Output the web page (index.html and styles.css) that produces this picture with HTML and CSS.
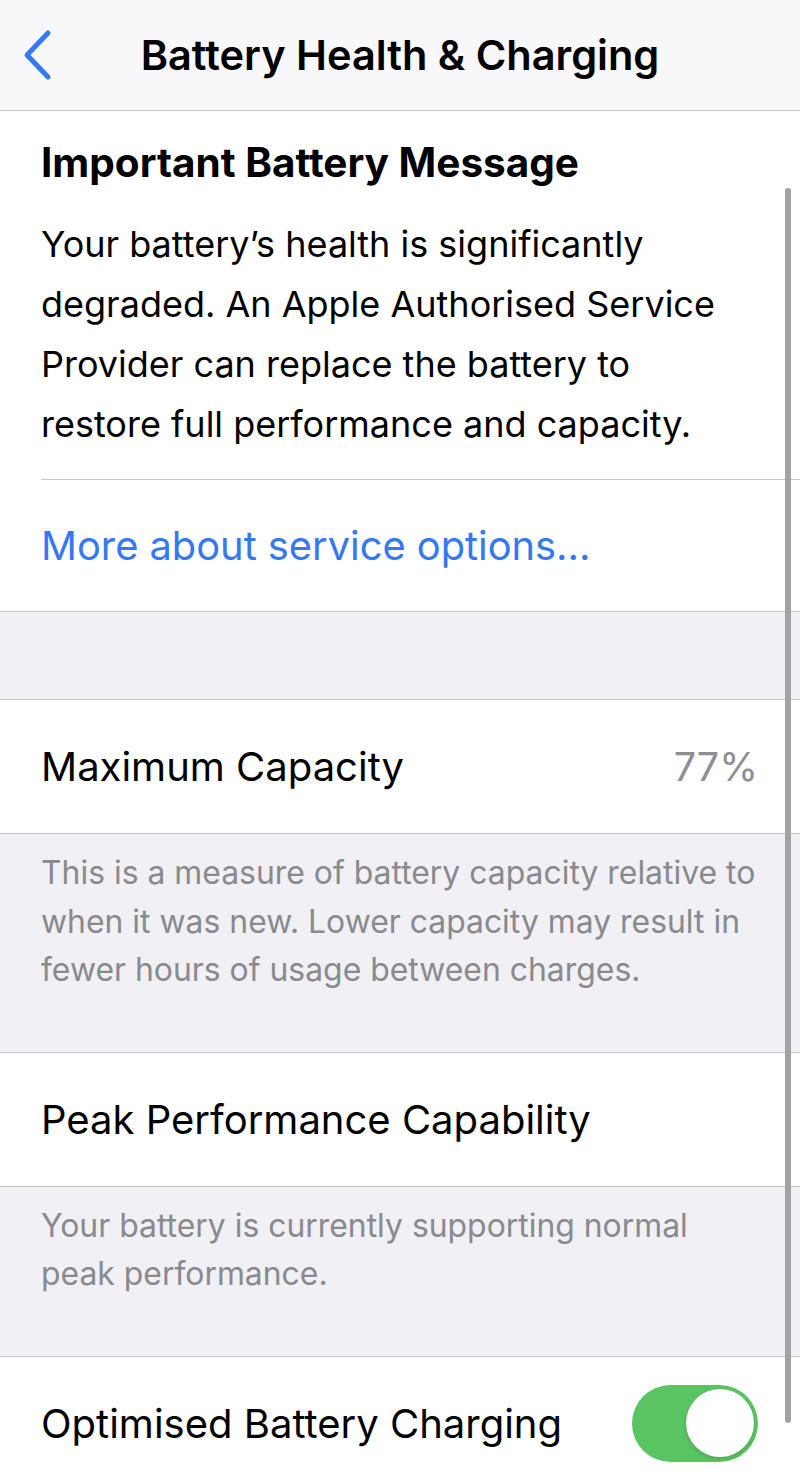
FILE: index.html
```html
<!DOCTYPE html>
<html lang="en">
<head>
  <meta charset="UTF-8" />
  <title>Battery Health &amp; Charging</title>
  <link rel="stylesheet" href="styles.css">
</head>
<body>

<!-- Navigation bar -->
<div class="nav">
  <svg class="back" width="34" height="52" viewBox="0 0 34 52">
    <path d="M29 4 L8 26 L29 48" fill="none" stroke="#3478f6" stroke-width="5" stroke-linecap="round" stroke-linejoin="round"/>
  </svg>
  <h1>Battery Health &amp; Charging</h1>
</div>

<!-- Important message -->
<div class="group message">
  <h2>Important Battery Message</h2>
  <p>Your battery’s health is significantly degraded. An Apple Authorised Service Provider can replace the battery to restore full performance and capacity.</p>
  <div class="link-row">
    <a href="#">More about service options...</a>
  </div>
</div>

<div class="spacer"></div>

<!-- Capacity -->
<div class="group top-line">
  <div class="row">
    <span class="label">Maximum Capacity</span>
    <span class="value">77%</span>
  </div>
</div>
<div class="footer-text">
  This is a measure of battery capacity relative to when it was new. Lower capacity may result in fewer hours of usage between charges.
</div>

<!-- Peak performance -->
<div class="group top-line">
  <div class="row">
    <span class="label">Peak Performance Capability</span>
  </div>
</div>
<div class="footer-text">
  Your battery is currently supporting normal peak performance.
</div>

<!-- Optimised charging -->
<div class="group top-line">
  <div class="row">
    <span class="label">Optimised Battery Charging</span>
    <span class="toggle on"><span class="knob"></span></span>
  </div>
</div>

<div class="scrollbar"></div>

</body>
</html>
```

FILE: styles.css
```css
body {
  margin: 0;
  font-family: 'Inter', 'Noto Sans', sans-serif;
  background-color: #f0f0f5;
  color: #000;
  overflow: hidden;
  position: relative;
}

.nav {
  height: 110px;
  background-color: #f8f8fa;
  border-bottom: 1px solid #c6c6c8;
  display: flex;
  align-items: center;
  justify-content: center;
  position: relative;
}

.nav .back {
  position: absolute;
  left: 19px;
  top: 29px;
}

.nav h1 {
  margin: 0;
  font-size: 41.5px;
  font-weight: 600;
}

.group {
  background-color: #fff;
  border-bottom: 1px solid #c6c6c8;
}

.top-line {
  border-top: 1px solid #c6c6c8;
}

/* Important message block */
.message {
  padding-left: 41px;
}

.message h2 {
  margin: 0;
  padding-top: 28px;
  font-size: 40.5px;
  line-height: 48px;
  font-weight: 700;
}

.message p {
  margin: 27px 0 0 0;
  padding-right: 40px;
  padding-bottom: 25px;
  font-size: 36px;
  line-height: 60px;
  border-bottom: 1px solid #c6c6c8;
}

.link-row {
  height: 131px;
  display: flex;
  align-items: center;
}

.link-row a {
  color: #3478f6;
  text-decoration: none;
  font-size: 39.8px;
}

.spacer {
  height: 87px;
}

/* Table rows */
.row {
  height: 133px;
  display: flex;
  align-items: center;
  justify-content: space-between;
  padding: 0 42px 0 41px;
}

.row .label {
  font-size: 40px;
}

.row .value {
  font-size: 39.5px;
  color: #8e8e93;
}

.footer-text {
  padding: 15px 40px 57px 41px;
  font-size: 31.9px;
  line-height: 48.5px;
  color: #8a8a8e;
}

/* Switch */
.toggle {
  width: 126px;
  height: 77px;
  border-radius: 39px;
  background-color: #5ac463;
  display: flex;
  align-items: center;
  justify-content: flex-end;
  padding: 0 4px;
  box-sizing: border-box;
}

.toggle .knob {
  width: 68px;
  height: 68px;
  border-radius: 50%;
  background-color: #fff;
  box-shadow: 0 2px 4px rgba(0,0,0,0.15);
}

.scrollbar {
  position: absolute;
  left: 785px;
  top: 188px;
  width: 6px;
  height: 1235px;
  border-radius: 3px;
  background-color: #a2a2a2;
}
```
